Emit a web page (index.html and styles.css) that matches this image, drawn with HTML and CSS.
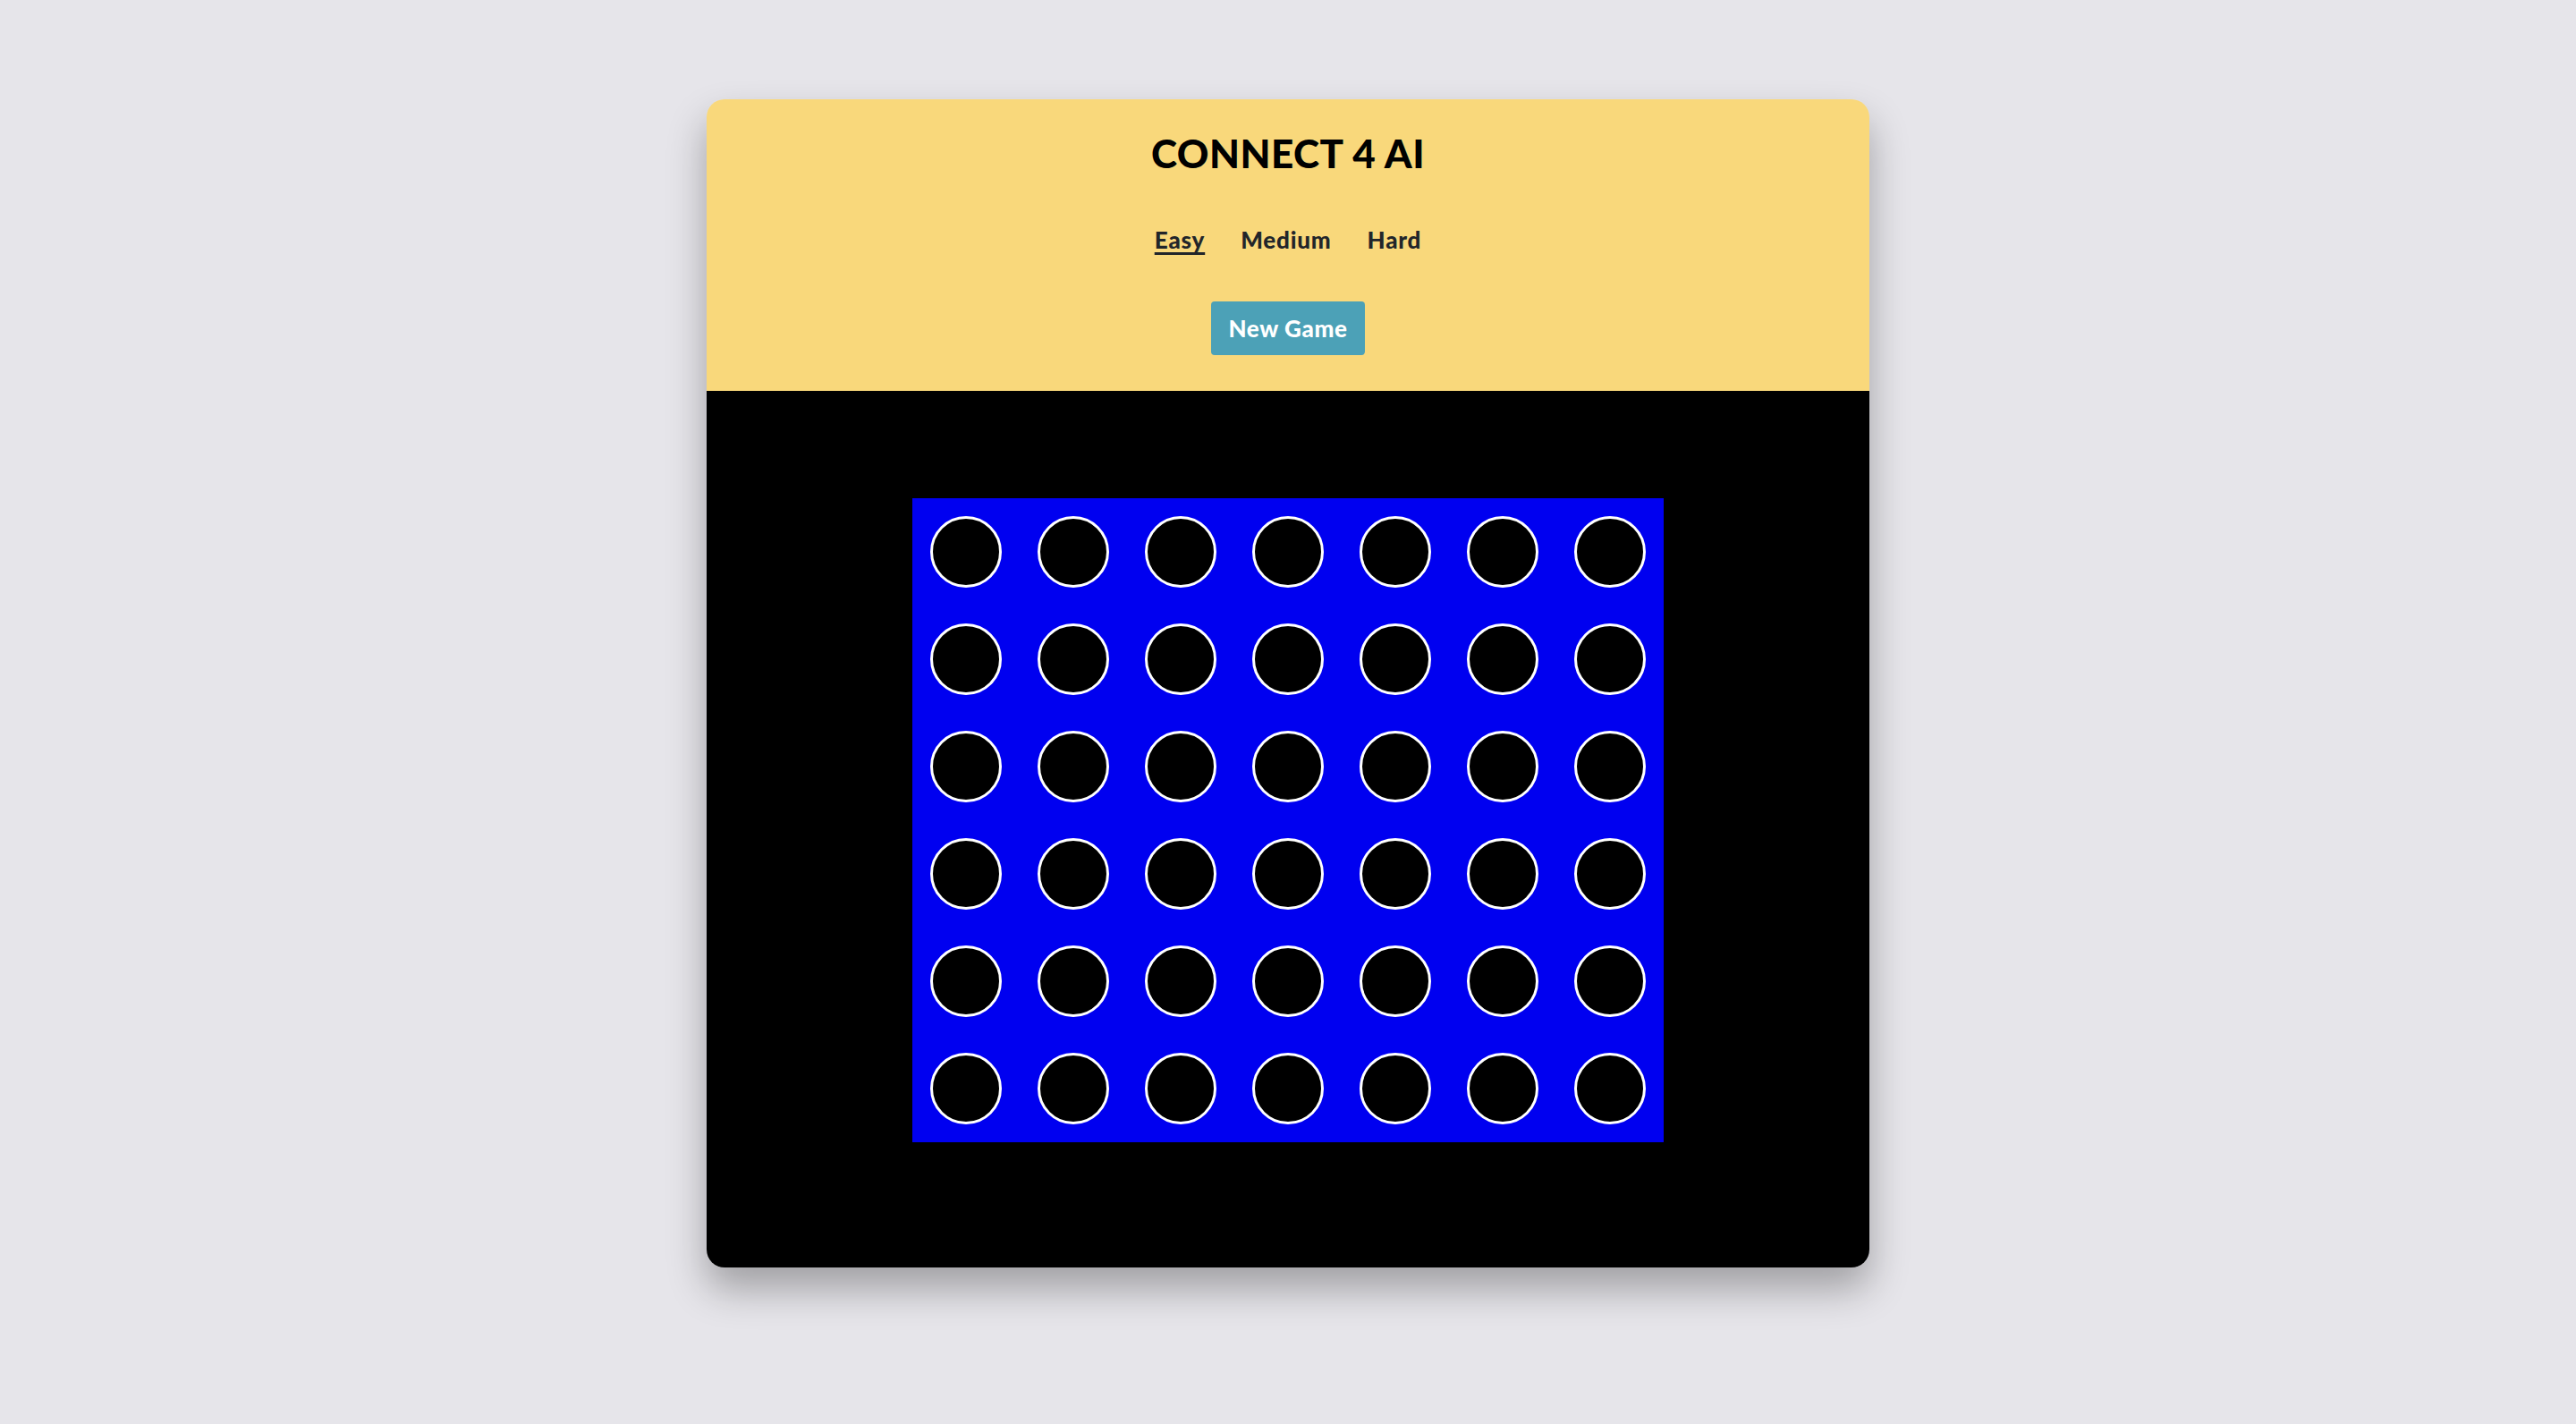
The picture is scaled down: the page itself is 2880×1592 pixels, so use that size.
FILE: index.html
```html
<!DOCTYPE html>
<html lang="en">
<head>
<meta charset="utf-8">
<title>Connect 4 AI</title>
<link rel="stylesheet" href="styles.css">
</head>
<body>
<main class="page">
  <section class="card">
    <header class="header">
      <h1 class="title">CONNECT 4 AI</h1>
      <nav class="levels">
        <span class="level active">Easy</span>
        <span class="level">Medium</span>
        <span class="level">Hard</span>
      </nav>
      <button class="new-game">New Game</button>
    </header>
    <div class="stage">
      <div class="board">
        <div class="cell"><div class="hole"></div></div><div class="cell"><div class="hole"></div></div><div class="cell"><div class="hole"></div></div><div class="cell"><div class="hole"></div></div><div class="cell"><div class="hole"></div></div><div class="cell"><div class="hole"></div></div><div class="cell"><div class="hole"></div></div>
        <div class="cell"><div class="hole"></div></div><div class="cell"><div class="hole"></div></div><div class="cell"><div class="hole"></div></div><div class="cell"><div class="hole"></div></div><div class="cell"><div class="hole"></div></div><div class="cell"><div class="hole"></div></div><div class="cell"><div class="hole"></div></div>
        <div class="cell"><div class="hole"></div></div><div class="cell"><div class="hole"></div></div><div class="cell"><div class="hole"></div></div><div class="cell"><div class="hole"></div></div><div class="cell"><div class="hole"></div></div><div class="cell"><div class="hole"></div></div><div class="cell"><div class="hole"></div></div>
        <div class="cell"><div class="hole"></div></div><div class="cell"><div class="hole"></div></div><div class="cell"><div class="hole"></div></div><div class="cell"><div class="hole"></div></div><div class="cell"><div class="hole"></div></div><div class="cell"><div class="hole"></div></div><div class="cell"><div class="hole"></div></div>
        <div class="cell"><div class="hole"></div></div><div class="cell"><div class="hole"></div></div><div class="cell"><div class="hole"></div></div><div class="cell"><div class="hole"></div></div><div class="cell"><div class="hole"></div></div><div class="cell"><div class="hole"></div></div><div class="cell"><div class="hole"></div></div>
        <div class="cell"><div class="hole"></div></div><div class="cell"><div class="hole"></div></div><div class="cell"><div class="hole"></div></div><div class="cell"><div class="hole"></div></div><div class="cell"><div class="hole"></div></div><div class="cell"><div class="hole"></div></div><div class="cell"><div class="hole"></div></div>
      </div>
    </div>
  </section>
</main>
</body>
</html>
```

FILE: styles.css
```css
* { box-sizing: border-box; }

html, body {
  margin: 0;
  padding: 0;
  background: #e6e5ea;
  font-family: "Lato", "Liberation Sans", sans-serif;
}

.page {
  min-height: 1592px;
  display: flex;
  justify-content: center;
  align-items: flex-start;
  padding-top: 111px;
}

.card {
  width: 1300px;
  border-radius: 20px;
  overflow: hidden;
  box-shadow: 0 24px 44px rgba(0, 0, 0, 0.3);
  display: flex;
  flex-direction: column;
}

.header {
  background: #f9d87b;
  height: 326px;
  padding-top: 30px;
  display: flex;
  flex-direction: column;
  align-items: center;
}

.title {
  margin: 0;
  font-size: 44px;
  line-height: 60px;
  font-weight: 900;
  color: #000;
  letter-spacing: 0.5px;
}

.levels {
  margin-top: 47px;
  display: flex;
  gap: 40px;
  height: 40px;
}

.level {
  font-size: 26px;
  line-height: 40px;
  font-weight: 900;
  letter-spacing: 0.8px;
  color: #22252a;
}

.level.active {
  text-decoration: underline;
  text-decoration-thickness: 3px;
  text-underline-offset: 4px;
}

.new-game {
  margin-top: 49px;
  height: 60px;
  width: 172px;
  padding: 0;
  border: none;
  border-radius: 4px;
  background: #4ca1b7;
  color: #fff;
  font-family: inherit;
  font-size: 26px;
  font-weight: 900;
  letter-spacing: 0.6px;
}

.stage {
  background: #000;
  height: 980px;
  padding-top: 120px;
  display: flex;
  justify-content: center;
  align-items: flex-start;
}

.board {
  background: #0000f0;
  display: grid;
  grid-template-columns: repeat(7, 120px);
  grid-template-rows: repeat(6, 120px);
}

.cell {
  display: flex;
  align-items: center;
  justify-content: center;
}

.hole {
  width: 80px;
  height: 80px;
  border-radius: 50%;
  background: #000;
  border: 3px solid #fff;
}
```
